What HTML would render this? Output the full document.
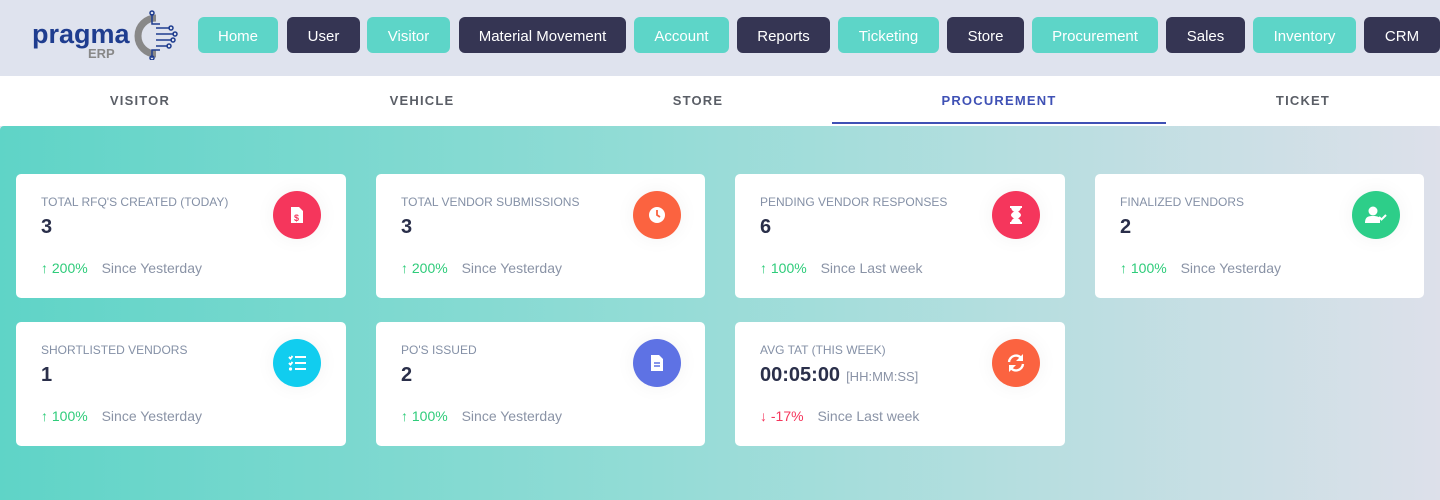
<!DOCTYPE html>
<html><head><style>
*{margin:0;padding:0;box-sizing:border-box}
body{width:1440px;height:500px;overflow:hidden;font-family:"Liberation Sans",sans-serif;background:#dfe3ee;position:relative}
.hdr{position:absolute;left:0;top:0;width:1440px;height:76px;background:#dfe3ee}
.btn{position:absolute;top:17px;height:36px;border-radius:6px;color:#fff;font-size:15px;line-height:36px;padding-top:2px;text-align:center}
.t{background:#5dd5c8}.d{background:#353553}
.tabs{position:absolute;top:76px;left:0;width:1440px;height:50px;background:#fff}
.tab{position:absolute;top:17px;font-size:13px;font-weight:bold;letter-spacing:1.2px;color:#5a5e66;transform:translateX(-50%)}
.ul{position:absolute;left:832px;top:46px;width:334px;height:2px;background:#3f51b5}
.main{position:absolute;top:126px;left:0;width:1440px;height:374px;background:linear-gradient(90deg,#5fd4c7 0%,#93dcd6 45%,#dde0ea 100%);border-radius:4px 4px 0 0}
.card{position:absolute;width:330px;height:124px;background:#fff;border-radius:5px}
.lab{position:absolute;left:25px;top:21px;font-size:12px;color:#8490a6}
.val{position:absolute;left:25px;top:42px;font-size:20px;font-weight:bold;color:#2a2f4a}
.val small{font-size:13px;font-weight:normal;color:#8a93a6;margin-left:6px}
.ft{position:absolute;left:25px;top:86px;font-size:14px;color:#8a93a6}
.up{color:#2ecc7a;margin-right:10px}.dn{color:#f5365c;margin-right:10px}
.up b,.dn b{font-weight:bold}
.ic{position:absolute;left:257px;top:17px;width:48px;height:48px;border-radius:50%;display:flex;align-items:center;justify-content:center;box-shadow:0 0 20px rgba(0,0,0,.05)}
</style></head><body>
<div class="hdr">
<svg style="position:absolute;left:30px;top:8px" width="150" height="52">
<text x="2" y="35" font-family="Liberation Sans" font-weight="bold" font-size="27" fill="#1f3d8f">pragma</text>
<text x="58" y="50" font-family="Liberation Sans" font-weight="bold" font-size="13" fill="#888">ERP</text>
<path d="M126 10 A18 18 0 0 0 126 46" stroke="#888" stroke-width="7" fill="none"/>
<g stroke="#1f3d8f" stroke-width="1.5" fill="none"><path d="M122 6v10h8M126 20h14M126 26h18M126 32h16M126 38h12M122 50v-8h8"/><circle cx="122" cy="5" r="2"/><circle cx="141" cy="20" r="2"/><circle cx="145" cy="26" r="2"/><circle cx="143" cy="32" r="2"/><circle cx="139" cy="38" r="2"/><circle cx="122" cy="50" r="2"/></g>
</svg>
<div class="btn t" style="left:198px;width:80px">Home</div>
<div class="btn d" style="left:287px;width:73px">User</div>
<div class="btn t" style="left:367px;width:83px">Visitor</div>
<div class="btn d" style="left:459px;width:167px">Material Movement</div>
<div class="btn t" style="left:634px;width:95px">Account</div>
<div class="btn d" style="left:737px;width:93px">Reports</div>
<div class="btn t" style="left:838px;width:101px">Ticketing</div>
<div class="btn d" style="left:947px;width:77px">Store</div>
<div class="btn t" style="left:1032px;width:126px">Procurement</div>
<div class="btn d" style="left:1166px;width:79px">Sales</div>
<div class="btn t" style="left:1253px;width:103px">Inventory</div>
<div class="btn d" style="left:1364px;width:76px">CRM</div>
</div>
<div class="tabs">
<div class="tab" style="left:140px">VISITOR</div>
<div class="tab" style="left:422px">VEHICLE</div>
<div class="tab" style="left:698px">STORE</div>
<div class="tab" style="left:999px;color:#3f51b5">PROCUREMENT</div>
<div class="tab" style="left:1303px">TICKET</div>
<div class="ul"></div>
</div>
<div class="main">
<div class="card" style="left:16px;top:48px"><div class="lab">TOTAL RFQ'S CREATED (TODAY)</div><div class="val">3</div><div class="ft"><span class="up"><b>↑</b> 200%</span> Since Yesterday</div><div class="ic" style="background:#f5365c"><svg width="16" height="18"><path d="M2 1h8l4 4v12H2z" fill="#fff"/><text x="5" y="15" font-size="9" fill="#f5365c" font-weight="bold">$</text></svg></div></div>
<div class="card" style="left:376px;top:48px;width:329px"><div class="lab">TOTAL VENDOR SUBMISSIONS</div><div class="val">3</div><div class="ft"><span class="up"><b>↑</b> 200%</span> Since Yesterday</div><div class="ic" style="background:#fb6340"><svg width="18" height="18"><circle cx="9" cy="9" r="8" fill="#fff"/><path d="M9 4v5l3 2" stroke="#fb6340" stroke-width="1.8" fill="none"/></svg></div></div>
<div class="card" style="left:735px;top:48px"><div class="lab">PENDING VENDOR RESPONSES</div><div class="val">6</div><div class="ft"><span class="up"><b>↑</b> 100%</span> Since Last week</div><div class="ic" style="background:#f5365c"><svg width="14" height="18"><path d="M1 1h12M1 17h12M3 1c0 5 8 5 8 8s-8 3-8 8h8c0-5-8-5-8-8s8-3 8-8z" stroke="#fff" stroke-width="2" fill="#fff"/></svg></div></div>
<div class="card" style="left:1095px;top:48px;width:329px"><div class="lab">FINALIZED VENDORS</div><div class="val">2</div><div class="ft"><span class="up"><b>↑</b> 100%</span> Since Yesterday</div><div class="ic" style="background:#2dce89"><svg width="22" height="18"><circle cx="8" cy="5" r="4.5" fill="#fff"/><path d="M0 17c0-6 3-7 8-7s7 1 7 4v3z" fill="#fff"/><path d="M14 11l2.5 2.5 4.5-4.5" stroke="#fff" stroke-width="2" fill="none"/></svg></div></div>
<div class="card" style="left:16px;top:196px"><div class="lab">SHORTLISTED VENDORS</div><div class="val">1</div><div class="ft"><span class="up"><b>↑</b> 100%</span> Since Yesterday</div><div class="ic" style="background:#11cdef"><svg width="18" height="16"><g stroke="#fff" stroke-width="2"><path d="M7 2h11M7 8h11M7 14h11M1 2l1.5 1.5 2-2.5M1 8l1.5 1.5 2-2.5"/></g><circle cx="2.5" cy="14" r="1.6" fill="#fff"/></svg></div></div>
<div class="card" style="left:376px;top:196px;width:329px"><div class="lab">PO'S ISSUED</div><div class="val">2</div><div class="ft"><span class="up"><b>↑</b> 100%</span> Since Yesterday</div><div class="ic" style="background:#5e72e4"><svg width="14" height="18"><path d="M1 1h8l4 4v12H1z" fill="#fff"/><path d="M4 9h6M4 12h6" stroke="#5e72e4" stroke-width="1.5"/></svg></div></div>
<div class="card" style="left:735px;top:196px"><div class="lab">AVG TAT (THIS WEEK)</div><div class="val">00:05:00<small>[HH:MM:SS]</small></div><div class="ft"><span class="dn"><b>↓</b> -17%</span> Since Last week</div><div class="ic" style="background:#fb6340"><svg width="20" height="20"><g stroke="#fff" stroke-width="2.4" fill="none"><path d="M3 9a7 7 0 0 1 13-3M17 11a7 7 0 0 1-13 3"/></g><path d="M17 1v7h-7zM3 19v-7h7z" fill="#fff"/></svg></div></div>
</div>
</body></html>
